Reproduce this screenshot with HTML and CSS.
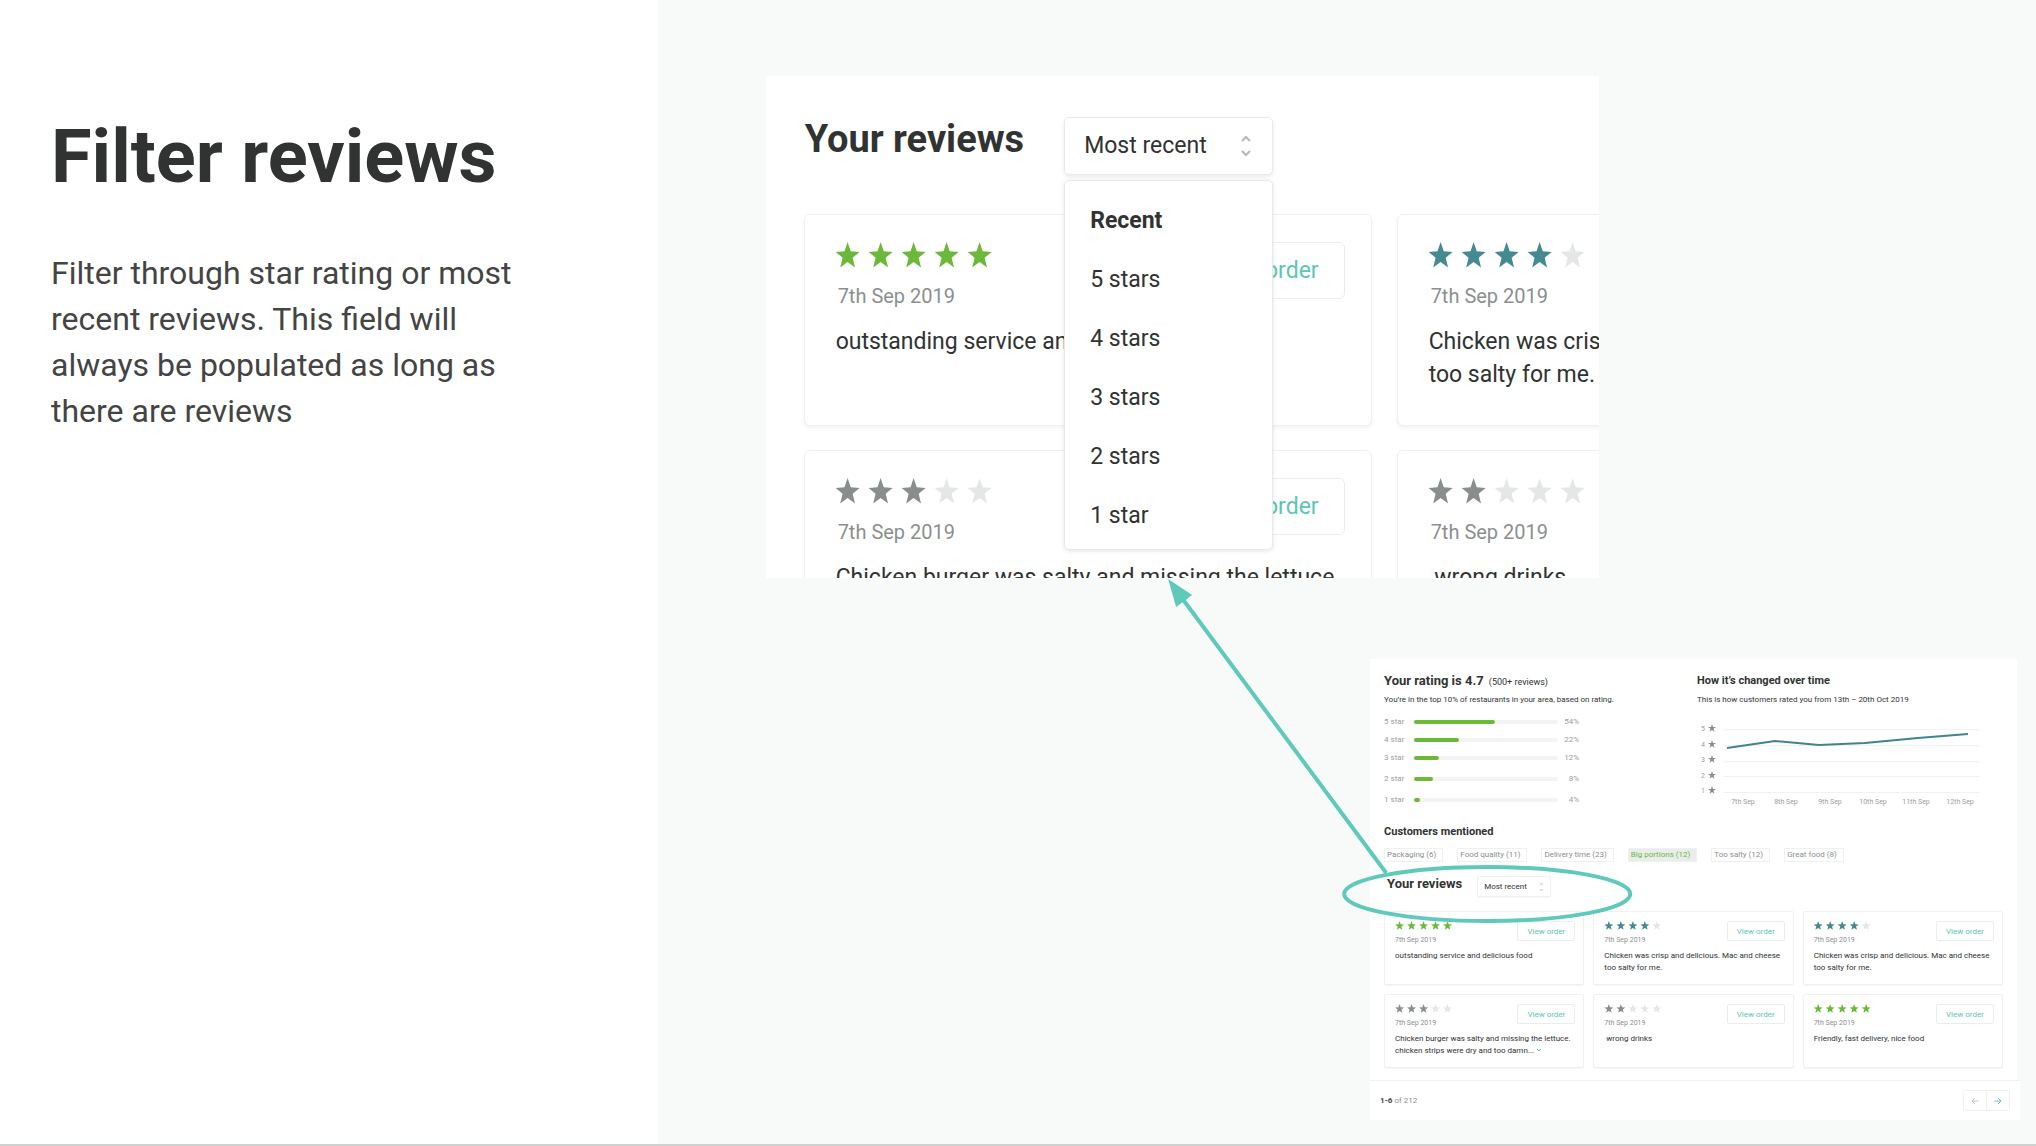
FILE: index.html
```html
<!DOCTYPE html>
<html lang="en">

<head>
    <meta charset="utf-8"/>
    <title>Filter reviews</title>
    <meta name="viewport" content="width=device-width, initial-scale=1">
    <link rel="stylesheet" href="styles.css">
</head>

<body>
<aside class="intro">
    <h1>Filter reviews</h1>
    <p>Filter through star rating or most recent reviews. This field will always be populated as long as there are reviews</p>
</aside>

<main class="stage">
    <section class="closeup">
        <div class="reviews-header">
            <h2><label for="sortLarge">Your reviews</label></h2>
            <div class="sort">
                <select id="sortLarge">
                    <option>Most recent</option>
                </select>
                <svg class="arrows" viewBox="0 0 12 24">
                    <path d="M2 7l4-4 4 4M2 17l4 4 4-4"/>
                </svg>
                <ul class="menu">
                    <li><button class="current">Recent</button></li>
                    <li><button>5 stars</button></li>
                    <li><button>4 stars</button></li>
                    <li><button>3 stars</button></li>
                    <li><button>2 stars</button></li>
                    <li><button>1 star</button></li>
                </ul>
            </div>
        </div>

        <div class="reviews">
            <article class="review">
                <header>
                    <div>
                        <div class="stars good"><i></i><i></i><i></i><i></i><i></i></div>
                        <time>7th Sep 2019</time>
                    </div>
                    <button class="view">View order</button>
                </header>
                <p>outstanding service and delicious food</p>
            </article>
            <article class="review">
                <header>
                    <div>
                        <div class="stars fine"><i></i><i></i><i></i><i></i><i class="off"></i></div>
                        <time>7th Sep 2019</time>
                    </div>
                </header>
                <p>Chicken was crisp<br>too salty for me.</p>
            </article>
            <article class="review">
                <header>
                    <div>
                        <div class="stars"><i></i><i></i><i></i><i class="off"></i><i class="off"></i></div>
                        <time>7th Sep 2019</time>
                    </div>
                    <button class="view">View order</button>
                </header>
                <p>Chicken burger was salty and missing the lettuce</p>
            </article>
            <article class="review">
                <header>
                    <div>
                        <div class="stars"><i></i><i></i><i class="off"></i><i class="off"></i><i class="off"></i></div>
                        <time>7th Sep 2019</time>
                    </div>
                </header>
                <p>&nbsp;wrong drinks</p>
            </article>
        </div>
    </section>

    <section class="overview">
        <div class="content">
            <div class="stats">
                <div class="rating">
                    <h2>Your rating is 4.7 <small>(500+ reviews)</small></h2>
                    <p>You’re in the top 10% of restaurants in your area, based on rating.</p>
                    <div class="row"><span>5 star</span><div class="bar"><div style="width: 56%"></div></div><span>54%</span></div>
                    <div class="row"><span>4 star</span><div class="bar"><div style="width: 31%"></div></div><span>22%</span></div>
                    <div class="row"><span>3 star</span><div class="bar"><div style="width: 17%"></div></div><span>12%</span></div>
                    <div class="row loose"><span>2 star</span><div class="bar"><div style="width: 13%"></div></div><span>8%</span></div>
                    <div class="row loose"><span>1 star</span><div class="bar"><div style="width: 4%"></div></div><span>4%</span></div>
                </div>

                <div class="history">
                    <h3>How it’s changed over time</h3>
                    <p>This is how customers rated you from 13th – 20th Oct 2019</p>
                    <svg class="chart" viewBox="0 0 290 96" width="290" height="96">
                        <defs>
                            <path id="star" d="M4 0l1 3h3L5.5 4.8l1 3L4 6 1.5 7.800l1-3L0 3h3z"/>
                        </defs>
                        <path class="grid" d="M26 16.5h257M26 32.5h257M26 48.5h257M26 63.5h257M26 79.5h257"/>
                        <g class="levels">
                            <text x="4" y="18">5</text>
                            <text x="4" y="34">4</text>
                            <text x="4" y="49">3</text>
                            <text x="4" y="65">2</text>
                            <text x="4" y="80">1</text>
                            <use href="#star" x="11" y="11"/>
                            <use href="#star" x="11" y="27"/>
                            <use href="#star" x="11" y="42"/>
                            <use href="#star" x="11" y="58"/>
                            <use href="#star" x="11" y="73"/>
                        </g>
                        <g class="days">
                            <text x="46" y="91">7th Sep</text>
                            <text x="89" y="91">8th Sep</text>
                            <text x="133" y="91">9th Sep</text>
                            <text x="176" y="91">10th Sep</text>
                            <text x="219" y="91">11th Sep</text>
                            <text x="263" y="91">12th Sep</text>
                        </g>
                        <polyline class="line" points="30,35 78,28 122,32 168,30 221,25 271,21"/>
                    </svg>
                </div>
            </div>

            <h3 class="mentioned">Customers mentioned</h3>
            <div class="tags">
                <span>Packaging (6)</span>
                <span>Food quality (11)</span>
                <span>Delivery time (23)</span>
                <span class="active">Big portions (12)</span>
                <span>Too salty (12)</span>
                <span>Great food (8)</span>
            </div>

            <div class="reviews-header">
                <h2><label for="sortSmall">Your reviews</label></h2>
                <div class="sort">
                    <select id="sortSmall">
                        <option>Most recent</option>
                    </select>
                    <svg class="arrows" viewBox="0 0 12 24">
                        <path d="M2 7l4-4 4 4M2 17l4 4 4-4"/>
                    </svg>
                </div>
            </div>

            <div class="reviews">
                <article class="review">
                    <header>
                        <div>
                            <div class="stars good"><i></i><i></i><i></i><i></i><i></i></div>
                            <time>7th Sep 2019</time>
                        </div>
                        <button class="view">View order</button>
                    </header>
                    <p>outstanding service and delicious food</p>
                </article>
                <article class="review">
                    <header>
                        <div>
                            <div class="stars fine"><i></i><i></i><i></i><i></i><i class="off"></i></div>
                            <time>7th Sep 2019</time>
                        </div>
                        <button class="view">View order</button>
                    </header>
                    <p>Chicken was crisp and delicious. Mac and cheese<br>too salty for me.</p>
                </article>
                <article class="review">
                    <header>
                        <div>
                            <div class="stars fine"><i></i><i></i><i></i><i></i><i class="off"></i></div>
                            <time>7th Sep 2019</time>
                        </div>
                        <button class="view">View order</button>
                    </header>
                    <p>Chicken was crisp and delicious. Mac and cheese<br>too salty for me.</p>
                </article>
                <article class="review">
                    <header>
                        <div>
                            <div class="stars"><i></i><i></i><i></i><i class="off"></i><i class="off"></i></div>
                            <time>7th Sep 2019</time>
                        </div>
                        <button class="view">View order</button>
                    </header>
                    <p>Chicken burger was salty and missing the lettuce.<br>chicken strips were dry and too damn...
                        <svg class="more" viewBox="0 0 6 4" width="6" height="4"><path d="M1 1l2 2 2-2"/></svg></p>
                </article>
                <article class="review">
                    <header>
                        <div>
                            <div class="stars"><i></i><i></i><i class="off"></i><i class="off"></i><i class="off"></i></div>
                            <time>7th Sep 2019</time>
                        </div>
                        <button class="view">View order</button>
                    </header>
                    <p>&nbsp;wrong drinks</p>
                </article>
                <article class="review">
                    <header>
                        <div>
                            <div class="stars good"><i></i><i></i><i></i><i></i><i></i></div>
                            <time>7th Sep 2019</time>
                        </div>
                        <button class="view">View order</button>
                    </header>
                    <p>Friendly, fast delivery, nice food</p>
                </article>
            </div>
        </div>

        <footer>
            <span><b>1-6</b> of 212</span>
            <div class="pager">
                <button aria-label="Previous" disabled>
                    <svg viewBox="0 0 8 8" width="8" height="8"><path d="M7.5 4H1M4 1L1 4l3 3"/></svg>
                </button>
                <button aria-label="Next">
                    <svg viewBox="0 0 8 8" width="8" height="8"><path d="M.5 4H7M4 1l3 3-3 3"/></svg>
                </button>
            </div>
        </footer>
    </section>

    <!-- arrow from the circled filter to the close-up -->
    <svg class="callout" viewBox="0 0 1378 1144" preserveAspectRatio="none">
        <path d="M728 873L523 597"/>
        <ellipse cx="829" cy="894" rx="143" ry="27"/>
        <polygon points="510,579 534,595 518,607"/>
    </svg>
</main>
</body>

</html>
```

FILE: styles.css
```css
* {
    box-sizing: border-box;
}

body {
    margin: 0;
    min-height: 100vh;
    display: flex;
    font-family: Roboto, "Noto Sans", sans-serif;
    color: #303332;
    background: #f8faf9;
    border-bottom: 2px solid #cfd1d0;
}

h1, h2, h3, p, ul {
    margin: 0;
    padding: 0;
}

button, select {
    font-family: inherit;
    color: inherit;
    background: white;
    border: 0;
    margin: 0;
    padding: 0;
}

.intro {
    width: 32.3%;
    padding: 117px 120px 0 51px;
    background: white;
}

.intro h1 {
    font-size: 74px;
    line-height: 80px;
    white-space: nowrap;
}

.intro p {
    margin-top: 53px;
    font-size: 32px;
    line-height: 46px;
    color: #434444;
}

.stage {
    position: relative;
    flex: 1;
    display: flex;
    flex-direction: column;
    padding: 76px 19px 22px 108px;
}

/* shared review widgets */

.reviews-header {
    display: flex;
    align-items: flex-start;
}

.sort {
    position: relative;
}

.sort select {
    appearance: none;
    width: 100%;
    height: 100%;
    border: 1px solid #e8eaea;
}

.arrows {
    position: absolute;
    top: 50%;
    transform: translateY(-50%);
    fill: none;
    stroke: #b5b8b8;
    stroke-width: 2;
}

.reviews {
    display: grid;
}

.review {
    background: white;
    border: 1px solid #eff0f0;
}

.review header {
    display: flex;
    justify-content: space-between;
    align-items: flex-start;
}

.review time {
    display: block;
    color: #8c8f8f;
}

.view {
    border: 1px solid #ebeded;
    color: #5bc6b8;
}

.stars {
    display: flex;
    color: #898d8d;
}

.stars.good {
    color: #6cb93a;
}

.stars.fine {
    color: #438b91;
}

.stars i {
    background: currentColor;
    clip-path: polygon(50% 0, 63% 36%, 100% 38%, 71% 61%, 81% 98%, 50% 77%, 19% 98%, 29% 61%, 0 38%, 37% 36%);
}

.stars .off {
    background: #e5e7e7;
}

/* close-up */

.closeup {
    width: 66.6%;
    height: 502px;
    padding: 41px 0 0 38px;
    background: white;
    border-radius: 4px 0 0 0;
    overflow: hidden;
}

.closeup .reviews-header {
    gap: 40px;
    margin-bottom: 39px;
}

.closeup h2 {
    padding-left: 1px;
    font-size: 38px;
    line-height: 44px;
}

.closeup .sort {
    width: 209px;
    height: 58px;
}

.closeup select {
    padding: 0 0 2px 19px;
    font-size: 23px;
    border-radius: 5px;
    box-shadow: 0 2px 4px rgba(0, 0, 0, 0.08);
}

.closeup .arrows {
    right: 21px;
    width: 12px;
    height: 24px;
}

.menu {
    position: absolute;
    top: 63px;
    left: 0;
    width: 100%;
    padding: 10px 0 4px;
    list-style: none;
    background: white;
    border: 1px solid #e8eaea;
    border-radius: 5px;
    box-shadow: 0 1px 4px rgba(0, 0, 0, 0.1);
}

.menu button {
    display: block;
    width: 100%;
    padding-left: 25px;
    text-align: left;
    font-size: 23px;
    line-height: 59px;
    background: none;
}

.menu .current {
    font-weight: bold;
}

.closeup .reviews {
    grid-template-columns: 568px 568px;
    gap: 24px 25px;
}

.closeup .review {
    height: 212px;
    padding: 27px 26px 0 31px;
    border-radius: 6px;
    box-shadow: 0 2px 4px rgba(0, 0, 0, 0.05);
}

.closeup .stars {
    gap: 9px;
}

.closeup .stars i {
    width: 24px;
    height: 26px;
}

.closeup time {
    margin-top: 16px;
    font-size: 20px;
    line-height: 24px;
    padding-left: 2px;
}

.closeup .review p {
    margin-top: 17px;
    font-size: 23px;
    line-height: 33px;
    white-space: nowrap;
}

.closeup .view {
    width: 161px;
    height: 57px;
    font-size: 23px;
    border-radius: 6px;
}

/* overview */

.overview {
    width: 51.7%;
    margin-top: 81px;
    margin-left: auto;
    background: white;
    font-size: 8px;
    line-height: 12px;
}

.overview .content {
    padding: 14px 14px 12px;
}

.overview h2 {
    font-size: 13px;
    line-height: 16px;
}

.overview h3 {
    font-size: 11px;
    line-height: 16px;
}

.overview small {
    font-size: 9px;
    line-height: 9px;
    font-weight: normal;
    margin-left: 2px;
}

.stats {
    display: flex;
}

.stats h2, .stats h3 {
    height: 16px;
}

.stats p {
    margin-top: 5px;
    margin-bottom: 7px;
}

.rating {
    width: 313px;
}

.row {
    display: flex;
    align-items: center;
    width: 195px;
    height: 18px;
    color: #9b9e9e;
}

.row.loose {
    margin-top: 3px;
}

.row span {
    width: 30px;
}

.row span:last-child {
    width: 21px;
    text-align: right;
}

.bar {
    flex: 1;
    height: 4px;
    border-radius: 2px;
    background: #f3f4f4;
}

.bar div {
    height: 4px;
    border-radius: 2px;
    background: #6cb93a;
}

.chart {
    display: block;
}

.chart text {
    font-size: 7px;
    fill: #9b9e9e;
}

.grid {
    stroke: #f1f2f2;
}

.levels use {
    fill: #898d8d;
}

.days text {
    text-anchor: middle;
}

.line {
    fill: none;
    stroke: #3f858d;
    stroke-width: 2;
}

.overview .mentioned {
    margin-top: 15px;
}

.tags {
    display: flex;
    gap: 14px;
    margin-top: 8px;
}

.tags span {
    height: 14px;
    padding: 0 6px 0 2px;
    border: 1px solid #eff0f0;
    color: #8c8f8f;
    white-space: nowrap;
}

.tags .active {
    color: #6cb93a;
    background: #ebeded;
}

.overview .reviews-header {
    gap: 15px;
    margin: 14px 0 14px 3px;
}

.overview .sort {
    width: 74px;
    height: 21px;
}

.overview select {
    padding-left: 6px;
    font-size: 8px;
    border-radius: 2px;
    border-color: #eff0f0;
    box-shadow: 0 1px 1px rgba(0, 0, 0, 0.04);
}

.overview .arrows {
    right: 7px;
    width: 5px;
    height: 10px;
}

.overview .reviews {
    grid-template-columns: repeat(3, 1fr);
    gap: 9px;
}

.overview .review {
    height: 74px;
    padding: 9px 8px 0 10px;
    border-radius: 2px;
    box-shadow: 0 1px 1px rgba(0, 0, 0, 0.04);
}

.overview .stars {
    gap: 3px;
}

.overview .stars i {
    width: 9px;
    height: 9px;
}

.overview time {
    margin-top: 6px;
    font-size: 7px;
    line-height: 8px;
}

.overview .review p {
    margin-top: 6px;
    white-space: nowrap;
}

.overview .view {
    width: 58px;
    height: 20px;
    font-size: 8px;
    border-radius: 2px;
}

.more {
    fill: none;
    stroke: #5bc6b8;
    vertical-align: 1px;
}

.overview footer {
    display: flex;
    justify-content: space-between;
    align-items: center;
    height: 40px;
    margin-right: -3px;
    padding: 0 10px;
    background: white;
    border-top: 1px solid #eff0f0;
    color: #8c8f8f;
}

.overview footer b {
    color: #434444;
}

.pager {
    display: flex;
    border: 1px solid #eff0f0;
    border-radius: 2px;
}

.pager button {
    width: 22px;
    height: 19px;
    display: flex;
    align-items: center;
    justify-content: center;
    color: #5bc6b8;
}

.pager button + button {
    width: 23px;
    border-left: 1px solid #eff0f0;
}

.pager button:disabled {
    color: #c3c6c6;
}

.pager svg {
    fill: none;
    stroke: currentColor;
}

/* callout over both screens */

.callout {
    position: absolute;
    top: 0;
    left: 0;
    width: 100%;
    height: 100%;
    fill: none;
    stroke: #5fc9bb;
    stroke-width: 4;
    pointer-events: none;
}

.callout polygon {
    fill: #5fc9bb;
    stroke: none;
}
```
